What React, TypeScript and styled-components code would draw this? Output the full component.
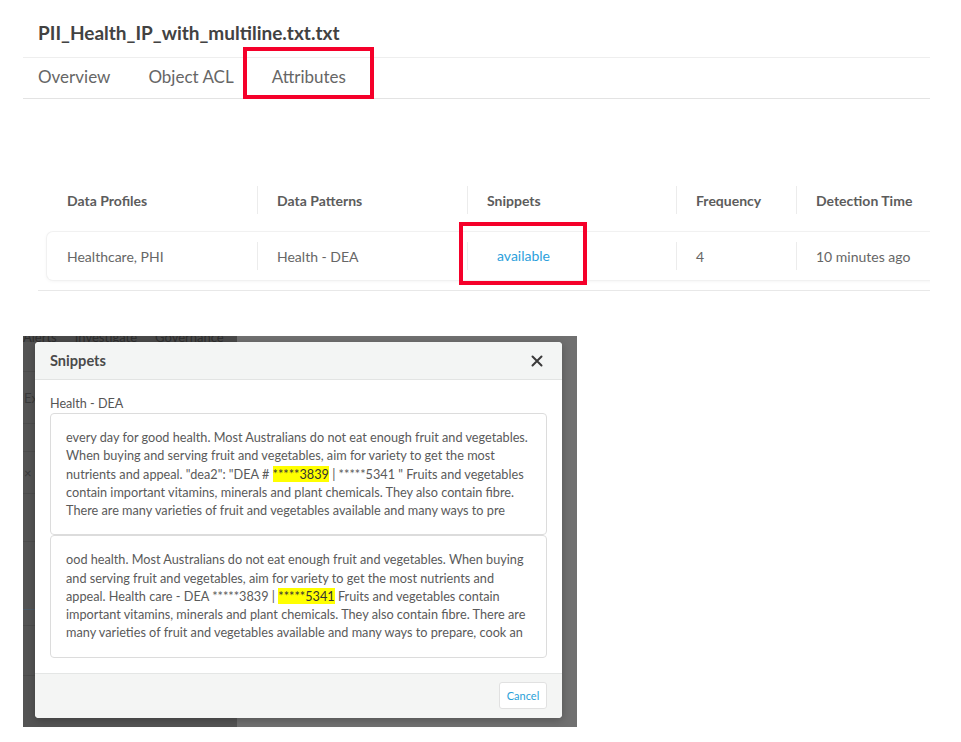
import React from "react";
import styled, { createGlobalStyle, css } from "styled-components";

const Global = createGlobalStyle`
  html, body { margin: 0; padding: 0; background: #ffffff; }
  body { font-family: Lato, "Open Sans", "Liberation Sans", Arial, sans-serif; -webkit-font-smoothing: antialiased; }
  * { box-sizing: border-box; }
`;

const RED = "#f5002a";

const Page = styled.div`
  width: 961px;
  height: 742px;
  overflow: hidden;
  padding: 21px 0 0 23px;
`;

const Title = styled.h1`
  margin: 0 0 12px 15px;
  font-size: 19px;
  line-height: 24px;
  font-weight: 700;
  color: #424242;
`;

const TabBar = styled.nav`
  width: 907px;
  height: 42px;
  border-top: 1px solid #eeeeee;
  border-bottom: 1px solid #e3e3e3;
  display: flex;
  align-items: center;
  gap: 38px;
  padding-left: 15px;
`;

const Tab = styled.div<{ $marked?: boolean }>`
  position: relative;
  height: 100%;
  display: flex;
  align-items: center;
  padding-bottom: 3px;
  font-size: 17px;
  color: #666666;
  ${(p) =>
    p.$marked &&
    css`
      &::after {
        content: "";
        position: absolute;
        top: -11px;
        bottom: -1px;
        left: -29px;
        right: -28px;
        border: 4px solid ${RED};
      }
    `}
`;

const TableSection = styled.section`
  width: 892px;
  margin: 87px 0 0 15px;
  padding: 0 0 10px 9px;
  border-bottom: 1px solid #e8e8e8;
  overflow: hidden;
`;

const cols = "210px 210px 209px 120px 1fr";

const HeaderRow = styled.div`
  display: grid;
  grid-template-columns: ${cols};
  margin-bottom: 18px;
`;

const RowCard = styled.div`
  display: grid;
  grid-template-columns: ${cols};
  padding: 10px 0;
  margin-right: -14px;
  background: #fff;
  border-radius: 6px;
  box-shadow: 0 0 0 1px #f1f1f1, 0 1px 4px rgba(0, 0, 0, 0.06);
`;

const Cell = styled.div<{ $head?: boolean; $first?: boolean }>`
  height: 28px;
  display: flex;
  align-items: center;
  padding-left: ${(p) => (p.$first ? "20px" : "19px")};
  border-left: ${(p) => (p.$first ? "none" : "1px solid #ececec")};
  font-size: 14px;
  font-weight: ${(p) => (p.$head ? 700 : 400)};
  color: ${(p) => (p.$head ? "#5c5c5c" : "#666666")};
  white-space: nowrap;
`;

const Link = styled.span`
  position: relative;
  display: inline-block;
  margin-left: 10px;
  line-height: 18px;
  color: #2d9fdc;
  &::after {
    content: "";
    position: absolute;
    top: -25px;
    bottom: -20px;
    left: -38px;
    right: -37px;
    border: 4px solid ${RED};
  }
`;

const Backdrop = styled.div`
  width: 554px;
  height: 391px;
  margin-top: 45px;
  display: grid;
  grid-template-columns: 1fr;
  grid-template-rows: 1fr;
`;

const Underlay = styled.div`
  grid-area: 1 / 1;
  display: grid;
  grid-template-columns: 214px 1fr;
  overflow: hidden;
`;

const UnderLeft = styled.div`
  background: #545454;
  display: flex;
  flex-direction: column;
`;

const UnderRight = styled.div`
  background: #707070;
`;

const UnderNav = styled.div`
  height: 6px;
  overflow: hidden;
  background: #4a4a4a;
  display: flex;
  gap: 18px;
  padding-left: 0;
  font-size: 13px;
  line-height: 2px;
  color: #2e2e2e;
  white-space: nowrap;
`;

const UnderRow = styled.div<{ $h: number; $line?: string }>`
  height: ${(p) => p.$h}px;
  border-bottom: 1px solid ${(p) => p.$line || "#4c4c4c"};
  display: flex;
  align-items: center;
  font-size: 13px;
  color: #3a3a3a;
  padding-left: 1px;
`;

const Modal = styled.div`
  grid-area: 1 / 1;
  margin: 6px 15px 9px 12px;
  background: #ffffff;
  border-radius: 4px;
  overflow: hidden;
  display: flex;
  flex-direction: column;
  box-shadow: 0 2px 8px rgba(0, 0, 0, 0.25);
`;

const ModalHeader = styled.div`
  height: 38px;
  flex: none;
  background: #f3f5f4;
  border-bottom: 1px solid #e2e4e3;
  display: flex;
  align-items: center;
  justify-content: space-between;
  padding: 0 19px 0 15px;
`;

const ModalTitle = styled.div`
  font-size: 14.6px;
  font-weight: 700;
  color: #4a4a4a;
`;

const CloseBtn = styled.button`
  border: none;
  background: none;
  padding: 0;
  width: 12px;
  height: 12px;
  display: flex;
  cursor: pointer;
`;

const ModalBody = styled.div`
  flex: 1;
  padding: 15px 15px 15px 15px;
`;

const PatternLabel = styled.div`
  font-size: 12.6px;
  line-height: 18px;
  color: #555555;
`;

const SnippetBox = styled.div`
  border: 1px solid #dcdcdc;
  border-radius: 4px;
  padding: 14px 10px 15px 15px;
  font-size: 12.7px;
  line-height: 18.25px;
  color: #5a5a5a;
`;

const Line = styled.div`
  white-space: nowrap;
`;

const Mark = styled.span`
  background: #ffff00;
  color: #333333;
`;

const ModalFooter = styled.div`
  height: 45px;
  flex: none;
  background: #f4f5f4;
  border-top: 1px solid #e4e6e5;
  display: flex;
  align-items: center;
  justify-content: flex-end;
  padding: 0 15px 2px;
`;

const CancelButton = styled.button`
  width: 48px;
  height: 27px;
  background: #ffffff;
  border: 1px solid #e1e1e1;
  border-radius: 3px;
  font-family: inherit;
  font-size: 11px;
  color: #2a9fd8;
  padding: 0;
  cursor: pointer;
`;

type Seg = string | { hl: string };
const snippets: Seg[][][] = [
  [
    ["every day for good health. Most Australians do not eat enough fruit and vegetables."],
    ["When buying and serving fruit and vegetables, aim for variety to get the most"],
    ['nutrients and appeal. "dea2": "DEA # ', { hl: "*****3839" }, ' | *****5341 " Fruits and vegetables'],
    ["contain important vitamins, minerals and plant chemicals. They also contain fibre."],
    ["There are many varieties of fruit and vegetables available and many ways to pre"],
  ],
  [
    ["ood health. Most Australians do not eat enough fruit and vegetables. When buying"],
    ["and serving fruit and vegetables, aim for variety to get the most nutrients and"],
    ["appeal. Health care - DEA *****3839 | ", { hl: "*****5341" }, " Fruits and vegetables contain"],
    ["important vitamins, minerals and plant chemicals. They also contain fibre. There are"],
    ["many varieties of fruit and vegetables available and many ways to prepare, cook an"],
  ],
];

const headers = ["Data Profiles", "Data Patterns", "Snippets", "Frequency", "Detection Time"];

export default function App() {
  return (
    <>
      <Global />
      <Page>
        <Title>PII_Health_IP_with_multiline.txt.txt</Title>
        <TabBar>
          <Tab>Overview</Tab>
          <Tab>Object ACL</Tab>
          <Tab $marked>Attributes</Tab>
        </TabBar>

        <TableSection>
          <HeaderRow>
            {headers.map((h, i) => (
              <Cell key={h} $head $first={i === 0}>
                {h}
              </Cell>
            ))}
          </HeaderRow>
          <RowCard>
            <Cell $first>Healthcare, PHI</Cell>
            <Cell>Health - DEA</Cell>
            <Cell>
              <Link>available</Link>
            </Cell>
            <Cell>4</Cell>
            <Cell>10 minutes ago</Cell>
          </RowCard>
        </TableSection>

        <Backdrop>
          <Underlay>
            <UnderLeft>
              <UnderNav>
                <span>Alerts</span>
                <span>Investigate</span>
                <span>Governance</span>
              </UnderNav>
              <UnderRow $h={30} />
              <UnderRow $h={52}>Ex</UnderRow>
              <UnderRow $h={28} />
              <UnderRow $h={42}>×</UnderRow>
              <UnderRow $h={48} />
              <UnderRow $h={68} $line="#4d5a66" />
              <UnderRow $h={16} />
              <UnderRow $h={50} />
            </UnderLeft>
            <UnderRight />
          </Underlay>

          <Modal>
            <ModalHeader>
              <ModalTitle>Snippets</ModalTitle>
              <CloseBtn aria-label="Close">
                <svg width="12" height="12" viewBox="0 0 12 12">
                  <path d="M1.5 1.5 L10.5 10.5 M10.5 1.5 L1.5 10.5" stroke="#3a3a3a" strokeWidth="2" strokeLinecap="round" />
                </svg>
              </CloseBtn>
            </ModalHeader>
            <ModalBody>
              <PatternLabel>Health - DEA</PatternLabel>
              {snippets.map((box, bi) => (
                <SnippetBox key={bi}>
                  {box.map((line, li) => (
                    <Line key={li}>
                      {line.map((seg, si) =>
                        typeof seg === "string" ? (
                          <React.Fragment key={si}>{seg}</React.Fragment>
                        ) : (
                          <Mark key={si}>{seg.hl}</Mark>
                        )
                      )}
                    </Line>
                  ))}
                </SnippetBox>
              ))}
            </ModalBody>
            <ModalFooter>
              <CancelButton>Cancel</CancelButton>
            </ModalFooter>
          </Modal>
        </Backdrop>
      </Page>
    </>
  );
}
